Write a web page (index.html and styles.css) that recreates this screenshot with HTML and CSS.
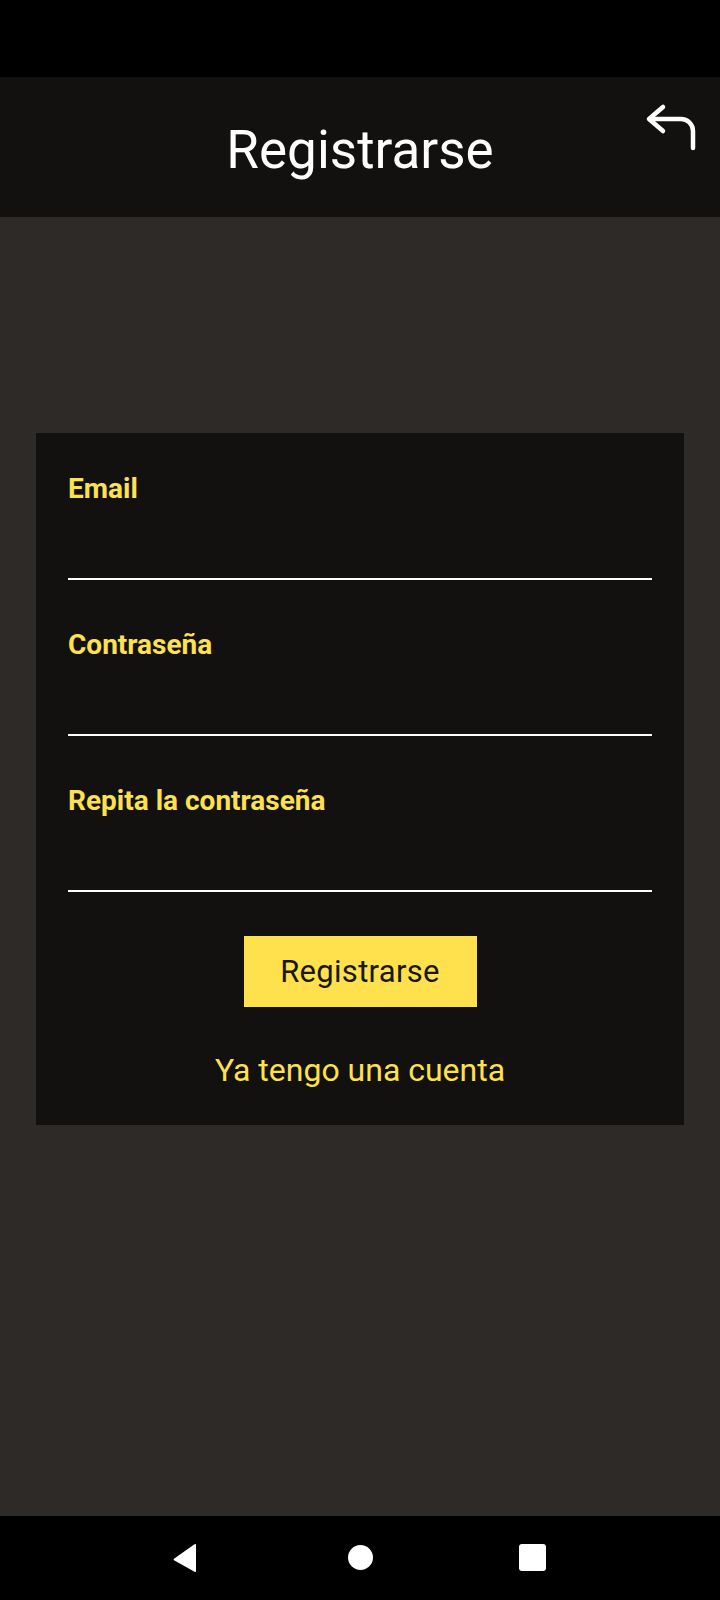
FILE: index.html
```html
<!DOCTYPE html>
<html lang="es">
<head>
<meta charset="utf-8">
<title>Registrarse</title>
<link rel="stylesheet" href="styles.css">
</head>
<body>
<div class="screen">
  <div class="status-bar"></div>
  <header class="app-bar">
    <h1 class="title">Registrarse</h1>
    <button class="back-btn" aria-label="Volver">
      <svg width="60" height="60" viewBox="0 0 60 60" fill="none" stroke="#ffffff" stroke-width="4.5" stroke-linecap="round" stroke-linejoin="round">
        <path d="M27 12 L13 24 L27 36"/>
        <path d="M14 24 H45 A12 12 0 0 1 57 36 V53"/>
      </svg>
    </button>
  </header>
  <main class="content">
    <form class="card">
      <div class="field">
        <label class="label">Email</label>
        <div class="input"></div>
      </div>
      <div class="field">
        <label class="label">Contraseña</label>
        <div class="input"></div>
      </div>
      <div class="field">
        <label class="label">Repita la contraseña</label>
        <div class="input"></div>
      </div>
      <div class="actions">
        <button type="button" class="primary-btn">Registrarse</button>
        <a class="link">Ya tengo una cuenta</a>
      </div>
    </form>
  </main>
  <nav class="nav-bar">
    <svg class="nav-icon" width="26" height="30" viewBox="0 0 26 30">
      <path d="M2 15.8 L22.5 1.3 Q24 0.5 24 2 V28 Q24 29.5 22.5 28.7 L2 17.2 Q1 16.5 2 15.8 Z" fill="#ffffff"/>
    </svg>
    <span class="nav-home"></span>
    <span class="nav-recent"></span>
  </nav>
</div>
</body>
</html>
```

FILE: styles.css
```css
* { box-sizing: border-box; }
html, body {
  margin: 0;
  padding: 0;
  background: #000;
}
.screen {
  width: 720px;
  height: 1600px;
  display: flex;
  flex-direction: column;
  font-family: Roboto, "Liberation Sans", sans-serif;
  background: #2e2a27;
}
.status-bar {
  height: 77px;
  background: #000;
  flex: none;
}
.app-bar {
  position: relative;
  height: 140px;
  flex: none;
  background: #131110;
  display: flex;
  align-items: center;
  justify-content: center;
  padding-top: 6px;
}
.title {
  margin: 0;
  color: #ffffff;
  font-size: 53px;
  font-weight: 400;
  line-height: 61px;
}
.back-btn {
  position: absolute;
  right: 24px;
  top: 18px;
  width: 60px;
  height: 60px;
  padding: 0;
  border: 0;
  background: transparent;
  display: block;
}
.back-btn svg { display: block; }
.content {
  flex: 1;
  padding: 216px 36px 0;
}
.card {
  background: #131110;
  padding: 39px 32px 36px;
  display: flex;
  flex-direction: column;
  gap: 48px;
}
.field {
  display: flex;
  flex-direction: column;
}
.label {
  color: #fde14f;
  font-size: 28px;
  font-weight: 700;
  line-height: 33px;
}
.input {
  height: 75px;
  border-bottom: 2px solid #ffffff;
}
.actions {
  display: flex;
  flex-direction: column;
  align-items: center;
  gap: 44px;
  margin-top: -4px;
}
.primary-btn {
  width: 233px;
  height: 71px;
  border: 0;
  border-radius: 0;
  background: #fee14d;
  color: #1a1716;
  font-family: Roboto, "Liberation Sans", sans-serif;
  font-size: 31px;
  font-weight: 400;
  letter-spacing: 0.3px;
  padding: 0;
}
.link {
  color: #fde14f;
  font-size: 32px;
  line-height: 38px;
}
.nav-bar {
  height: 84px;
  flex: none;
  background: #000;
  display: flex;
  align-items: center;
  justify-content: center;
  gap: 0;
  padding-bottom: 1px;
}
.nav-icon {
  display: block;
  margin-left: 172px;
  margin-right: 150px;
}
.nav-home {
  width: 25px;
  height: 25px;
  border-radius: 50%;
  background: #ffffff;
  margin-right: 146px;
}
.nav-recent {
  width: 27px;
  height: 27px;
  border-radius: 3px;
  background: #ffffff;
  margin-right: 174px;
}
```
